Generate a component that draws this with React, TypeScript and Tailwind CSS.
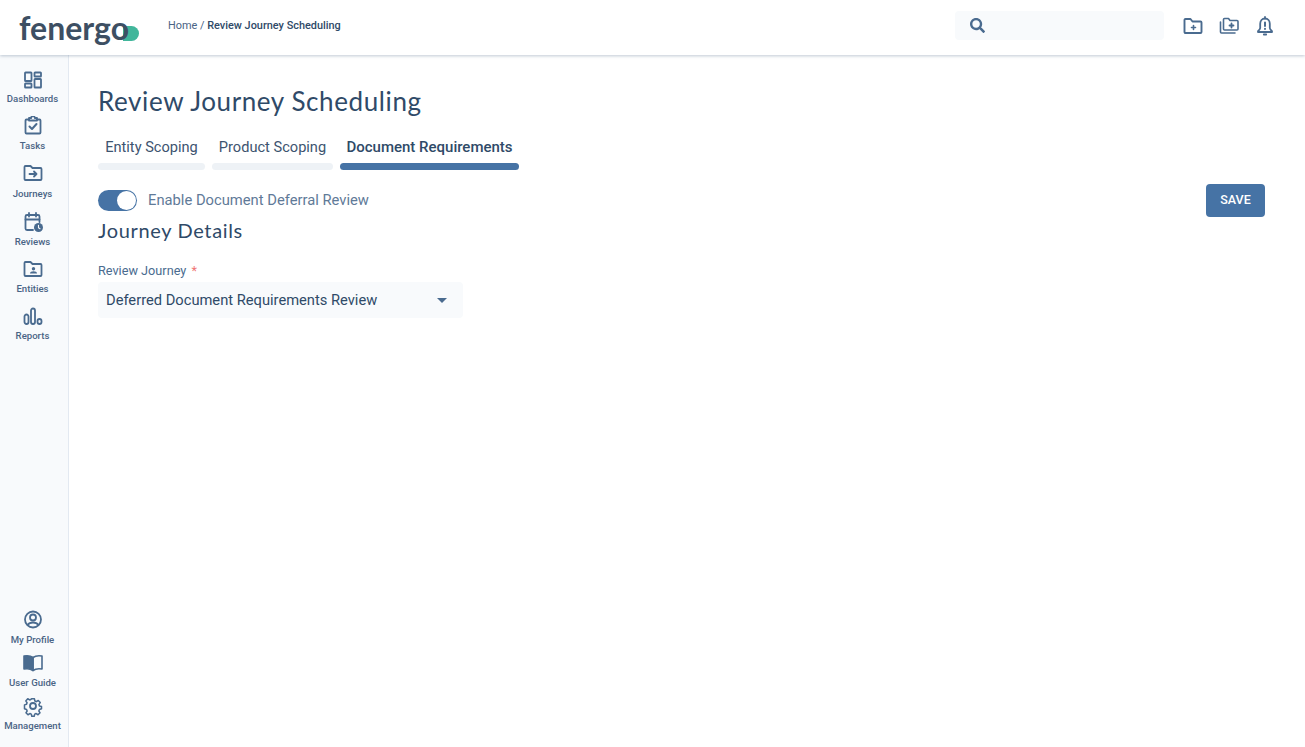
import { FaSearch } from "react-icons/fa";
import type { ReactNode } from "react";

const iconClass = "w-[22px] h-[22px] text-[#4a6b8f]";

function Icon({ children }: { children: ReactNode }) {
    return (
        <svg viewBox="0 0 22 22" className={iconClass} fill="none" stroke="currentColor" strokeWidth="1.8" strokeLinejoin="round" strokeLinecap="round">
            {children}
        </svg>
    );
}

const DashboardsIcon = () => (
    <Icon>
        <rect x="3" y="3.500" width="6.500" height="8.500" rx="0.600" />
        <rect x="12.500" y="3.500" width="6.500" height="4" rx="0.600" />
        <rect x="3" y="14.500" width="6.500" height="4" rx="0.600" />
        <rect x="12.500" y="10" width="6.500" height="8.500" rx="0.600" />
    </Icon>
);
const TasksIcon = () => (
    <Icon>
        <path d="M7 3.500H4.500a1 1 0 0 0-1 1v12a1 1 0 0 0 1 1h13a1 1 0 0 0 1-1v-12a1 1 0 0 0-1-1H15" />
        <path d="M7 4.500V2h2.200a1.800 1.800 0 0 1 3.600 0H15v2.500z" />
        <path d="M7.500 10.500l2.500 2.500 4.500-5" strokeWidth="2" />
    </Icon>
);
const JourneysIcon = () => (
    <Icon>
        <path d="M2.500 4a1 1 0 0 1 1-1h5l2 2h8a1 1 0 0 1 1 1v10a1 1 0 0 1-1 1h-15a1 1 0 0 1-1-1z" />
        <path d="M7.500 11h7M12 8.500l2.500 2.500-2.500 2.500" />
    </Icon>
);
const ReviewsIcon = () => (
    <svg viewBox="0 0 22 22" className={iconClass} fill="none" stroke="currentColor" strokeWidth="1.800" strokeLinecap="round" strokeLinejoin="round">
        <path d="M11 19H5a1.500 1.500 0 0 1-1.500-1.500V5.500A1.500 1.500 0 0 1 5 4h11a1.500 1.500 0 0 1 1.500 1.500V11" />
        <path d="M3.500 8.500h14M7 2v3.500M14 2v3.500" />
        <circle cx="16.500" cy="16.500" r="4.500" fill="currentColor" stroke="none" />
        <path d="M16.500 14.300v2.400l1.500 1" stroke="#f8fafc" strokeWidth="1.100" />
    </svg>
);
const EntitiesIcon = () => (
    <Icon>
        <path d="M2.500 4a1 1 0 0 1 1-1h5l2 2h8a1 1 0 0 1 1 1v10a1 1 0 0 1-1 1h-15a1 1 0 0 1-1-1z" />
        <circle cx="11.500" cy="9.800" r="1.700" fill="currentColor" stroke="none" />
        <path d="M8 14.500c0-1.600 1.500-2.300 3.500-2.300s3.500.7 3.500 2.300z" fill="currentColor" stroke="none" />
    </Icon>
);
const ReportsIcon = () => (
    <Icon>
        <rect x="2.500" y="8.500" width="4" height="9.500" rx="2" />
        <rect x="9" y="2.500" width="4" height="15.500" rx="2" />
        <rect x="15.500" y="13" width="4" height="5" rx="2" />
    </Icon>
);
const ProfileIcon = () => (
    <Icon>
        <circle cx="11" cy="10.500" r="8" />
        <circle cx="11" cy="8.500" r="3" />
        <path d="M5.800 15.800c1.200-1.800 3-2.300 5.200-2.300s4 .5 5.200 2.300" />
    </Icon>
);
const GuideIcon = () => (
    <svg viewBox="0 0 22 22" className={iconClass} fill="none" stroke="currentColor" strokeWidth="1.600" strokeLinejoin="round">
        <path d="M11 5.500C9 4 5 3.500 2 4v13c3-.5 7 0 9 1.500z" fill="currentColor" />
        <path d="M11 5.500C13 4 17 3.500 20 4v13c-3-.5-7 0-9 1.500z" />
    </svg>
);
const ManagementIcon = () => (
    <Icon>
        <circle cx="11" cy="11" r="3" />
        <path d="M9.300 2.500h3.400l.5 2.600 1.700.8 2.300-1.400 2.300 2.500-1.500 2.100.6 1.800 2.400.8v2.600l-2.400.8-.7 1.800 1.400 2.100-2.400 2.300-2.200-1.400-1.700.7-.6 2.400H9.600l-.6-2.400-1.700-.7-2.200 1.400-2.400-2.300 1.400-2.100-.7-1.800-2.400-.8V9.700l2.400-.8.6-1.800-1.500-2.100 2.300-2.500 2.300 1.400 1.700-.8z" transform="translate(1.650 1.650) scale(0.85)" />
    </Icon>
);
const FolderPlusIcon = () => (
    <svg viewBox="0 0 20 18" className="w-5 h-[18px] text-[#4a6b8f]" fill="none" stroke="currentColor" strokeWidth="1.900" strokeLinejoin="round" strokeLinecap="round">
        <path d="M1.500 3a1 1 0 0 1 1-1h5l2 2.500h8a1 1 0 0 1 1 1V15a1 1 0 0 1-1 1h-15a1 1 0 0 1-1-1z" />
        <path d="M10.500 8.500v4M8.500 10.500h4" strokeWidth="1.600" />
    </svg>
);
const FoldersPlusIcon = () => (
    <svg viewBox="0 0 20 18" className="w-5 h-[18px] text-[#4a6b8f]" fill="none" stroke="currentColor" strokeWidth="1.600" strokeLinejoin="round" strokeLinecap="round">
        <path d="M4.500 2.500a1 1 0 0 1 1-1h4l1.500 2h7a1 1 0 0 1 1 1V12a1 1 0 0 1-1 1h-12.500a1 1 0 0 1-1-1z" />
        <path d="M1.500 5v10a1 1 0 0 0 1 1H16" />
        <path d="M12.500 6.500v4M10.500 8.500h4" strokeWidth="1.800" />
    </svg>
);
const BellAlertIcon = () => (
    <svg viewBox="0 0 18 20" className="w-[18px] h-5 text-[#4a6b8f]" fill="none" stroke="currentColor" strokeWidth="1.800" strokeLinejoin="round" strokeLinecap="round">
        <path d="M9 2.500c-3 0-4.800 2.300-4.800 5.200V12c0 1.300-1 2.200-2.200 3.200v.8h14v-.8c-1.200-1-2.200-1.900-2.200-3.200V7.700c0-2.900-1.800-5.200-4.800-5.200z" />
        <path d="M9 1v1.500M7.800 18.500h2.400" />
        <path d="M9 6.500v3.500M9 12.800v.3" strokeWidth="2" />
    </svg>
);

const topNav = [
    { label: "Dashboards", icon: <DashboardsIcon />, cls: "h-[47px]", labelCls: "mt-[2px]" },
    { label: "Tasks", icon: <TasksIcon />, cls: "h-[47px]", labelCls: "mt-[2px]" },
    { label: "Journeys", icon: <JourneysIcon />, cls: "h-[48px]", labelCls: "mt-[3px]" },
    { label: "Reviews", icon: <ReviewsIcon />, cls: "h-[48px]", labelCls: "mt-[3px]" },
    { label: "Entities", icon: <EntitiesIcon />, cls: "h-[47px]", labelCls: "mt-[2px]" },
    { label: "Reports", icon: <ReportsIcon />, cls: "h-[47px]", labelCls: "mt-[2px]" },
];

const bottomNav = [
    { label: "My Profile", icon: <ProfileIcon /> },
    { label: "User Guide", icon: <GuideIcon /> },
    { label: "Management", icon: <ManagementIcon /> },
];

const tabs = [
    { label: "Entity Scoping", width: "w-[107px]", active: false },
    { label: "Product Scoping", width: "w-[121px]", active: false },
    { label: "Document Requirements", width: "w-[179px]", active: true },
];

function NavItem({ label, icon, cls, labelCls }: { label: string; icon: ReactNode; cls?: string; labelCls?: string }) {
    return (
        <div className={`flex flex-col items-center ${cls ?? "h-[43px]"}`}>
            {icon}
            <span className={`text-[9.6px] leading-3 font-medium text-[#4a6485] whitespace-nowrap ${labelCls ?? "mt-[3px]"}`}>{label}</span>
        </div>
    );
}

export default function App() {
    return (
        <div className="w-[1305px] h-[747px] overflow-hidden bg-white flex flex-col font-['Roboto',sans-serif]">
            <header className="h-[55px] shrink-0 flex items-center bg-white shadow-[0_1px_3px_rgba(74,100,133,0.35)] relative z-10">
                <div className="relative ml-[19px] w-[120px] h-[40px]">
                    <div className="absolute left-[104px] top-[18px] w-[16px] h-[15px] rounded-r-full bg-[#41b69b]" />
                    <span className="absolute left-0 top-[1px] text-[32px] leading-[38px] font-['Lato',sans-serif] font-bold text-[#3d4f63]">fenergo</span>
                </div>
                <div className="ml-[29px] text-[10.9px] text-[#4a6485] -mt-[3px]">
                    Home / <span className="font-medium text-[#2f4a68]">Review Journey Scheduling</span>
                </div>
                <div className="ml-auto w-[209px] h-[29px] mr-[19px] -mt-[4px] rounded bg-[#f8fafc] flex items-center pl-[15px]">
                    <FaSearch className="w-[15px] h-[15px] text-[#4a6b8f]" />
                </div>
                <div className="flex items-center gap-[16px] mr-[31px] -mt-[3px]">
                    <FolderPlusIcon />
                    <FoldersPlusIcon />
                    <span className="ml-[1px]"><BellAlertIcon /></span>
                </div>
            </header>
            <div className="flex-1 flex min-h-0">
                <aside className="w-[69px] shrink-0 bg-[#f8fafc] border-r border-[#e3e9f1] flex flex-col justify-between pt-[14px] pb-[9px] pr-[3px]">
                    <nav className="flex flex-col">
                        {topNav.map((item) => (
                            <NavItem key={item.label} {...item} />
                        ))}
                    </nav>
                    <nav className="flex flex-col">
                        {bottomNav.map((item) => (
                            <NavItem key={item.label} {...item} />
                        ))}
                    </nav>
                </aside>
                <main className="flex-1 pl-[29px] pr-[40px] pt-[30px]">
                    <h1 className="text-[26px] leading-[32px] font-['Lato',sans-serif] text-[#2f4a68] tracking-[0.6px]">Review Journey Scheduling</h1>
                    <div className="flex gap-[7px] mt-[20px]">
                        {tabs.map((tab) => (
                            <div key={tab.label} className={tab.width}>
                                <div className={`leading-[20px] text-center whitespace-nowrap ${tab.active ? "text-[15px] font-medium text-[#2f4a68]" : "text-[14.6px] text-[#3d5470]"}`}>{tab.label}</div>
                                <div className={`h-[7px] mt-[6px] rounded-full ${tab.active ? "bg-[#4673a5]" : "bg-[#eef2f6]"}`} />
                            </div>
                        ))}
                    </div>
                    <div className="flex justify-between mt-[14px]">
                        <div>
                            <div className="flex items-center gap-[11px] mt-[6px]">
                                <div className="w-[39px] h-[21px] rounded-full bg-[#4673a5] flex items-center justify-end pr-[1px]">
                                    <div className="w-[19px] h-[19px] rounded-full bg-white" />
                                </div>
                                <span className="text-[14.75px] leading-[20px] -mt-[2px] text-[#5f7a98]">Enable Document Deferral Review</span>
                            </div>
                            <h2 className="text-[20px] leading-[24px] font-['Lato',sans-serif] text-[#2f4a68] tracking-[0.65px] mt-[7px]">Journey Details</h2>
                            <div className="text-[12.7px] leading-[16px] text-[#4a6b8f] mt-[21px]">
                                Review Journey <span className="text-[#ef7676] ml-[2px]">*</span>
                            </div>
                            <div className="w-[365px] h-[36px] mt-[3px] rounded bg-[#f8fafc] flex items-center justify-between pl-[8px] pr-[16px]">
                                <span className="text-[14.7px] text-[#2f4a68]">Deferred Document Requirements Review</span>
                                <div className="w-0 h-0 border-x-[5px] border-x-transparent border-t-[5px] border-t-[#4a6b8f]" />
                            </div>
                        </div>
                        <button className="w-[59px] h-[33px] rounded bg-[#4673a5] text-white text-[12.5px] font-medium">SAVE</button>
                    </div>
                </main>
            </div>
        </div>
    );
}
